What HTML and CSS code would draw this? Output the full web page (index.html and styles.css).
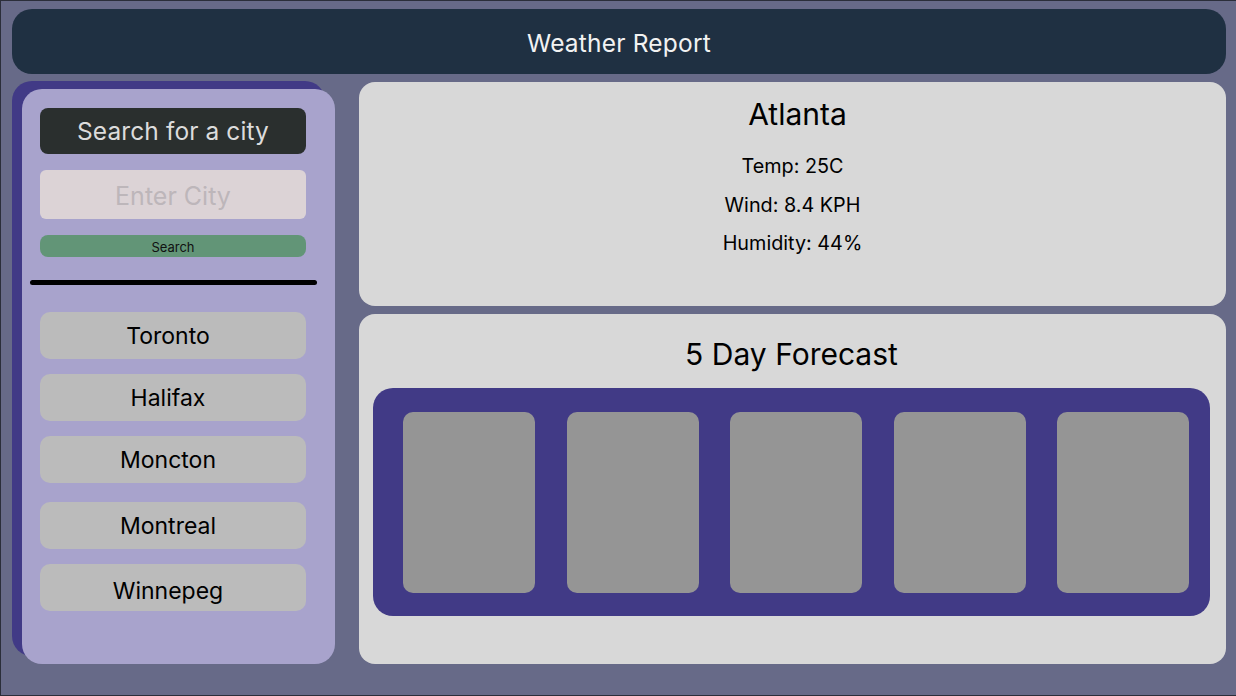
FILE: index.html
```html
<!DOCTYPE html>
<html lang="en">
<head>
<meta charset="utf-8">
<title>Weather Report</title>
<link rel="stylesheet" href="styles.css">
</head>
<body>
<div class="frame">
  <header class="topbar">
    <h1 class="title">Weather Report</h1>
  </header>
  <div class="content">
    <aside class="sidebar">
      <div class="search-head">Search for a city</div>
      <input class="city-input" type="text" placeholder="Enter City">
      <button class="search-btn" type="button">Search</button>
      <hr class="divider">
      <div class="history">
        <button class="city-btn" type="button">Toronto</button>
        <button class="city-btn" type="button">Halifax</button>
        <button class="city-btn" type="button">Moncton</button>
        <button class="city-btn city-btn-spaced" type="button">Montreal</button>
        <button class="city-btn" type="button">Winnepeg</button>
      </div>
    </aside>
    <main class="main">
      <section class="card current">
        <h2 class="city-name">Atlanta</h2>
        <p class="stat">Temp: 25C</p>
        <p class="stat">Wind: 8.4 KPH</p>
        <p class="stat">Humidity: 44%</p>
      </section>
      <section class="card forecast">
        <h2 class="forecast-title">5 Day Forecast</h2>
        <div class="days">
          <div class="day"></div>
          <div class="day"></div>
          <div class="day"></div>
          <div class="day"></div>
          <div class="day"></div>
        </div>
      </section>
    </main>
  </div>
</div>
</body>
</html>
```
FILE: styles.css
```css
* { box-sizing: border-box; }
html, body {
  margin: 0;
  padding: 0;
  width: 1236px;
  height: 696px;
  overflow: hidden;
  font-family: "Inter", "Noto Sans", sans-serif;
}
.frame {
  width: 1236px;
  height: 696px;
  background: #676a88;
  border-top: 1px solid #2b2e3a;
  border-left: 1px solid #2b2e3a;
  border-bottom: 1px solid #2b2e3a;
  padding: 8px 10px 0 11px;
  display: flex;
  flex-direction: column;
}
.topbar {
  height: 65px;
  background: #1f3042;
  border-radius: 20px;
  display: flex;
  align-items: center;
  justify-content: center;
  flex: none;
}
.title {
  margin: 0 0 -2px;
  color: #f2f2f2;
  font-weight: 400;
  font-size: 24.5px;
  letter-spacing: 0.2px;
}
.content {
  display: flex;
  margin-top: 8px;
  gap: 24px;
}
.sidebar {
  margin-top: 7px;
  margin-left: 10px;
  width: 313px;
  height: 575px;
  background: #a8a3cc;
  border-radius: 20px;
  box-shadow: -10px -8px 0 #413a86;
  padding: 19px 29px 0 18px;
  display: flex;
  flex-direction: column;
  flex: none;
}
.search-head {
  height: 46px;
  background: #2a2f2e;
  color: #dcdcdc;
  border-radius: 8px;
  font-size: 24.5px;
  display: flex;
  align-items: center;
  justify-content: center;
  letter-spacing: 0.1px;
}
.city-input {
  margin-top: 16px;
  height: 49px;
  width: 100%;
  border: none;
  border-radius: 6px;
  background: #dcd3d6;
  font-family: inherit;
  font-size: 25px;
  text-align: center;
  color: #333;
  outline: none;
  padding: 3px 0 0;
}
.city-input::placeholder { color: #bdb6ba; }
.search-btn {
  margin-top: 16px;
  height: 22px;
  width: 100%;
  border: none;
  border-radius: 8px;
  background: #629577;
  font-family: inherit;
  font-size: 13px;
  color: #111;
  padding: 1px 0 0;
}
.divider {
  margin: 23px -11px 0 -10px;
  height: 5px;
  border: none;
  border-radius: 3px;
  background: #000;
}
.history {
  margin-top: 27px;
  display: flex;
  flex-direction: column;
  gap: 15px;
}
.city-btn {
  height: 47px;
  width: 100%;
  border: none;
  border-radius: 10px;
  background: #bbbbbb;
  font-family: inherit;
  font-size: 23px;
  color: #000;
  padding: 0 10px 0 0;
}
.city-btn-spaced { margin-top: 4px; }
.city-btn-spaced + .city-btn { padding-top: 6px; }
.main {
  flex: 1;
  display: flex;
  flex-direction: column;
  gap: 8px;
}
.card {
  background: #d8d8d8;
  border-radius: 16px;
}
.current {
  height: 224px;
  display: flex;
  flex-direction: column;
  align-items: center;
  padding-top: 14px;
}
.city-name {
  margin: 0 0 15px;
  padding-left: 10px;
  font-weight: 400;
  font-size: 30px;
  color: #000;
}
.stat {
  margin: 0;
  font-size: 19.8px;
  line-height: 38.5px;
  color: #000;
}
.forecast {
  height: 350px;
  padding: 22px 16px 0 14px;
  display: flex;
  flex-direction: column;
}
.forecast-title {
  margin: 0 0 16px;
  text-align: center;
  font-weight: 400;
  font-size: 30px;
  line-height: 36px;
  color: #000;
}
.days {
  height: 228px;
  background: #413a86;
  border-radius: 20px;
  padding: 24px 21px 0 30px;
  display: flex;
  justify-content: space-between;
  align-items: flex-start;
}
.day {
  width: 132px;
  height: 181px;
  background: #959595;
  border-radius: 10px;
}
```
